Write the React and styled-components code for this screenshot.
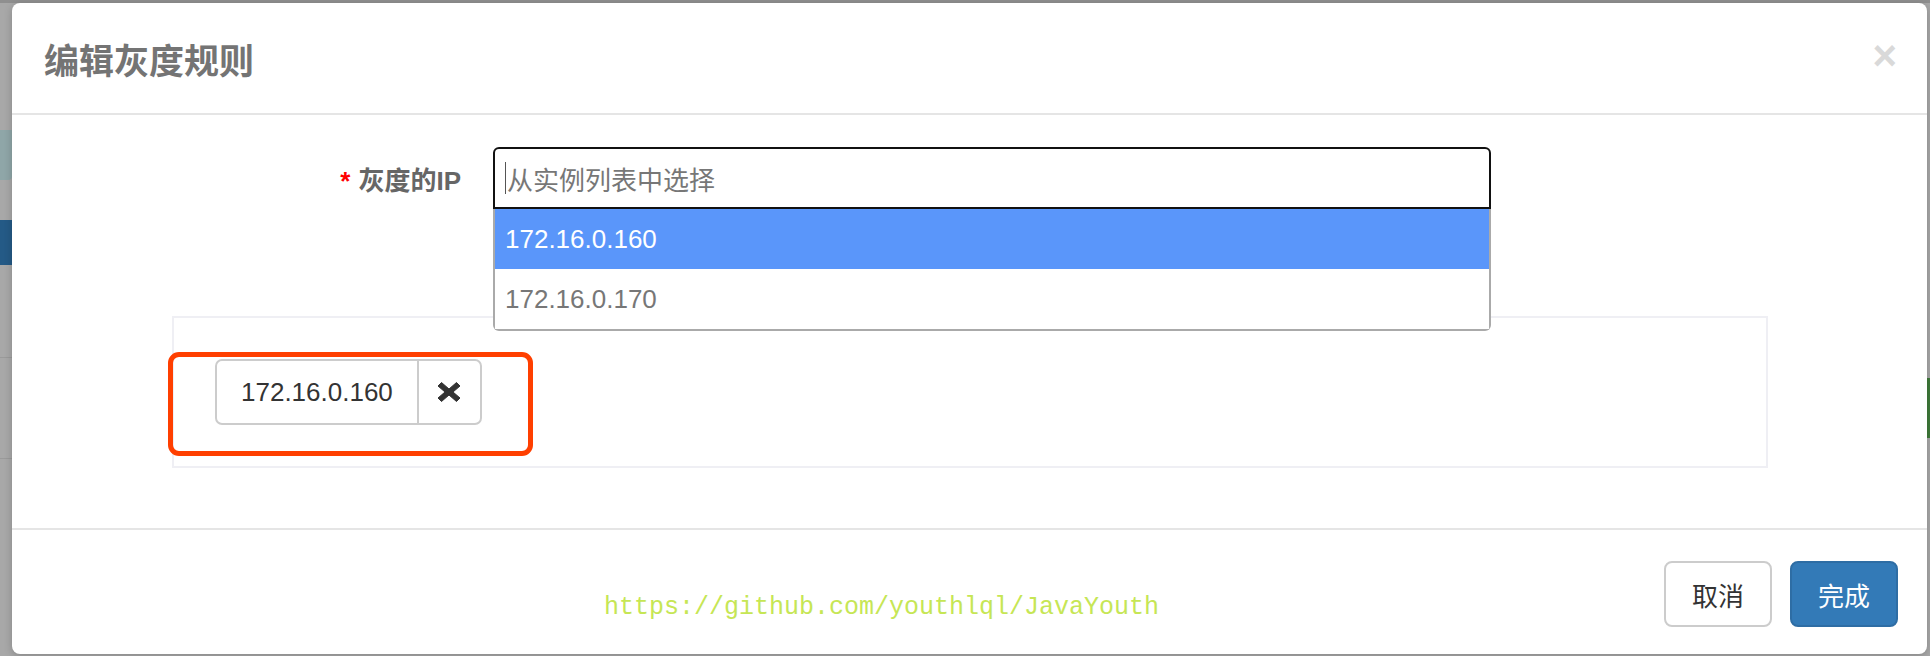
import styled, { createGlobalStyle } from 'styled-components'

const GlobalStyle = createGlobalStyle`
    html, body {
        margin: 0;
        padding: 0;
    }
    body {
        width: 1930px;
        height: 656px;
        overflow: hidden;
        background: #a8a8a8;
        font-family: "Liberation Sans", "Noto Sans CJK SC", sans-serif;
    }
`

const Page = styled.div`
    position: relative;
    width: 1930px;
    height: 656px;
    display: flex;
    flex-direction: column;
`

const TopBar = styled.div`
    height: 3px;
    background: #8f8f8f;
`

const PageBody = styled.div`
    flex: 1;
    display: flex;
    justify-content: space-between;
`

const SideStrip = styled.div`
    width: 12px;
    display: flex;
    flex-direction: column;
    padding-top: 127px;
`

const TealBlock = styled.div`
    height: 50px;
    background: #8fa6a8;
    border-radius: 0 0 4px 0;
`

const NavBar = styled.div`
    height: 45px;
    margin-top: 40px;
    background: #245a86;
`

const Rule = styled.div`
    height: 1px;
    margin-top: ${p => p.gap}px;
    background: #9a9a9a;
`

const RightStrip = styled.div`
    width: 3px;
    padding-top: 375px;
`

const GreenBlock = styled.div`
    height: 60px;
    background: #3f7a3a;
`

const Modal = styled.div`
    position: absolute;
    left: 12px;
    top: 3px;
    width: 1915px;
    height: 651px;
    background: #fff;
    border-radius: 8px;
    box-shadow: 0 2px 8px rgba(0, 0, 0, 0.2);
    display: flex;
    flex-direction: column;
`

const Header = styled.div`
    height: 110px;
    padding: 0 30px 0 32px;
    border-bottom: 2px solid #e5e5e5;
    display: flex;
    align-items: center;
    justify-content: space-between;
`

const Title = styled.h4`
    margin: 0;
    font-size: 35px;
    font-weight: bold;
    color: #747474;
`

const Close = styled.span`
    font-size: 42px;
    font-weight: bold;
    color: #d9d9d9;
    line-height: 1;
    margin-top: -4px;
`

const Body = styled.div`
    height: 381px;
    padding-top: 32px;
`

const FormRow = styled.div`
    display: grid;
    grid-template-columns: 449px 998px;
    column-gap: 32px;
    align-items: center;
`

const Label = styled.label`
    text-align: right;
    font-size: 26px;
    font-weight: bold;
    color: #666;
`

const Required = styled.span`
    color: #f00;
    margin-right: 8px;
`

const SelectBox = styled.div`
    position: relative;
    height: 62px;
`

const Input = styled.div`
    height: 100%;
    box-sizing: border-box;
    border: 2px solid #111;
    border-radius: 6px 6px 0 0;
    display: flex;
    align-items: center;
    padding-left: 10px;
    font-size: 26px;
    color: #777;
`

const Caret = styled.span`
    width: 1px;
    height: 32px;
    background: #555;
    margin-right: 1px;
`

const Dropdown = styled.ul`
    position: absolute;
    top: 100%;
    left: 0;
    right: 0;
    margin: 0;
    padding: 0;
    list-style: none;
    background: #fff;
    border: 2px solid #aaa;
    border-top: none;
    border-radius: 0 0 6px 6px;
    z-index: 2;
`

const Option = styled.li`
    height: 60px;
    display: flex;
    align-items: center;
    padding-left: 10px;
    font-size: 26px;
    color: ${p => (p.active ? '#fff' : '#777')};
    background: ${p => (p.active ? '#5a96fa' : '#fff')};
`

const Panel = styled.div`
    margin: 107px 159px 0 160px;
    height: 148px;
    border: 2px solid #efeff4;
    padding: 0 41px;
    display: flex;
    align-items: center;
`

const TagGroup = styled.div`
    position: relative;
    display: flex;
    height: 66px;
    box-sizing: border-box;
    border: 2px solid #ccc;
    border-radius: 7px;
`

const TagText = styled.span`
    display: flex;
    align-items: center;
    padding: 0 24px;
    font-size: 26px;
    color: #333;
`

const RemoveButton = styled.span`
    width: 61px;
    border-left: 2px solid #ccc;
    display: flex;
    align-items: center;
    justify-content: center;
`

const Highlight = styled.div`
    position: absolute;
    top: -9px;
    bottom: -33px;
    left: -49px;
    right: -53px;
    border: 5px solid #ff3f00;
    border-radius: 11px;
`

const Footer = styled.div`
    position: relative;
    border-top: 2px solid #e5e5e5;
    padding: 31px 29px 27px;
    display: flex;
    justify-content: flex-end;
    gap: 18px;
`

const Button = styled.button`
    width: 108px;
    height: 66px;
    font-family: inherit;
    font-size: 26px;
    border-radius: 8px;
    border: 2px solid ${p => (p.primary ? '#2e6da4' : '#ccc')};
    background: ${p => (p.primary ? '#337ab7' : '#fff')};
    color: ${p => (p.primary ? '#fff' : '#333')};
`

const Watermark = styled.span`
    position: absolute;
    left: 592px;
    top: 63px;
    font-family: "Liberation Mono", "DejaVu Sans Mono", monospace;
    font-size: 25px;
    line-height: 30px;
    color: #c6e655;
`

// glyphicon-style "remove" cross
const RemoveIcon = () => (
    <svg width="24" height="22" viewBox="0 0 24 22">
        <path
            d="M4.5 1.5 L12 8 L19.5 1.5 L23 5 L16 11 L23 17 L19.5 20.5 L12 14 L4.5 20.5 L1 17 L8 11 L1 5 Z"
            fill="#333"
            stroke="#333"
            strokeWidth="1"
            strokeLinejoin="round"
        />
    </svg>
)

export default function App() {
    return (
        <>
            <GlobalStyle />
            <Page>
                <TopBar />
                <PageBody>
                    <SideStrip>
                        <TealBlock />
                        <NavBar />
                        <Rule gap={92} />
                        <Rule gap={100} />
                    </SideStrip>
                    <RightStrip>
                        <GreenBlock />
                    </RightStrip>
                </PageBody>

                <Modal>
                    <Header>
                        <Title>编辑灰度规则</Title>
                        <Close>×</Close>
                    </Header>
                    <Body>
                        <FormRow>
                            <Label><Required>*</Required>灰度的IP</Label>
                            <SelectBox>
                                <Input><Caret />从实例列表中选择</Input>
                                <Dropdown>
                                    <Option active>172.16.0.160</Option>
                                    <Option>172.16.0.170</Option>
                                </Dropdown>
                            </SelectBox>
                        </FormRow>
                        <Panel>
                            <TagGroup>
                                <TagText>172.16.0.160</TagText>
                                <RemoveButton><RemoveIcon /></RemoveButton>
                                <Highlight />
                            </TagGroup>
                        </Panel>
                    </Body>
                    <Footer>
                        <Watermark>https://github.com/youthlql/JavaYouth</Watermark>
                        <Button>取消</Button>
                        <Button primary>完成</Button>
                    </Footer>
                </Modal>
            </Page>
        </>
    )
}
